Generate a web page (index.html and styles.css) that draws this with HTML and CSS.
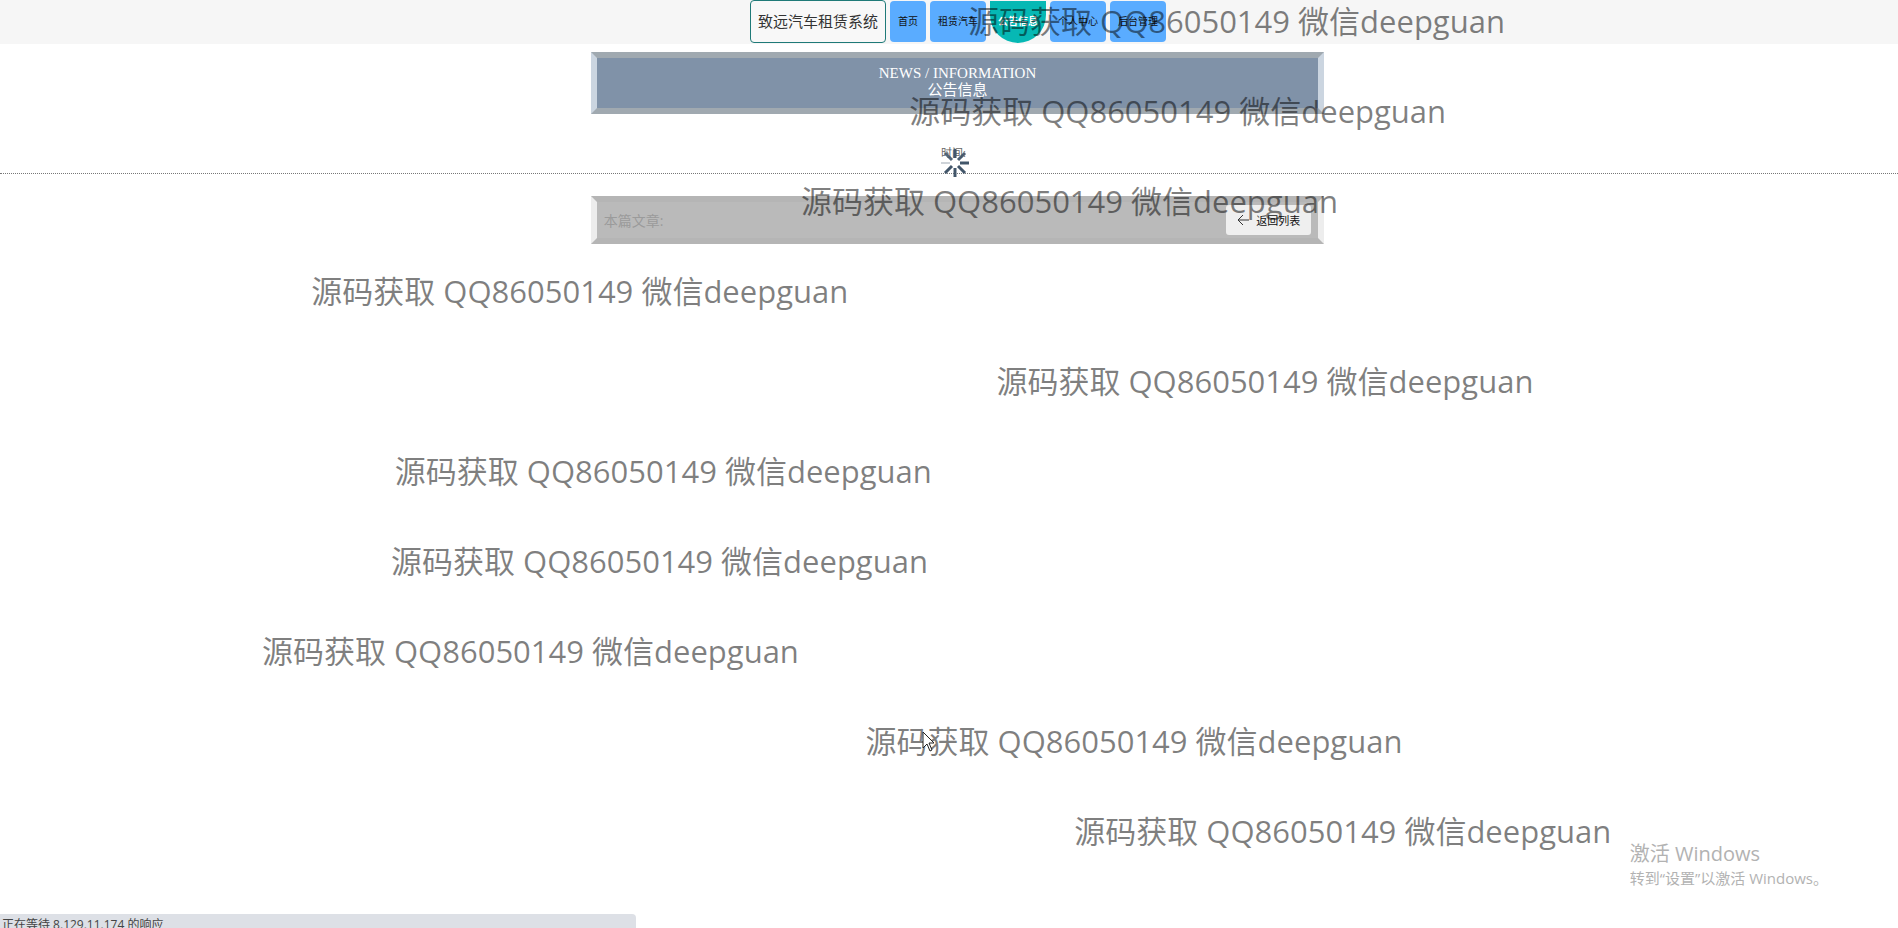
FILE: index.html
```
<!DOCTYPE html>
<html lang="zh-CN">
<head>
    <meta charset="UTF-8">
    <meta name="viewport" content="width=device-width, initial-scale=1.0">
    <title>公告信息</title>
    <link rel="stylesheet" href="styles.css">
</head>
<body>

<header class="header">
    <nav class="nav">
        <a class="brand" href="#">致远汽车租赁系统</a>
        <a class="nav-item" href="#">首页</a>
        <a class="nav-item" href="#">租赁汽车</a>
        <a class="nav-item active" href="#">公告信息</a>
        <a class="nav-item" href="#">个人中心</a>
        <a class="nav-item" href="#">后台管理</a>
    </nav>
</header>

<main class="main">
    <div class="row">
        <div class="panel title-panel">
            <h1>NEWS / INFORMATION</h1>
            <p>公告信息</p>
        </div>
    </div>

    <div class="row time-row">
        <div class="time">时间:
            <svg class="spinner" viewBox="0 0 28 28" width="28" height="28" stroke="#42566a" stroke-width="3">
                <path d="M14 0V9"/>
                <path d="M24 4L17 11" opacity=".95"/>
                <path d="M19 14H28"/>
                <path d="M17 17L24 24"/>
                <path d="M14 19V28"/>
                <path d="M11 17L4 24"/>
                <path d="M0 14H9" stroke-width="2" opacity=".25"/>
                <path d="M4 4L11 11" opacity=".9"/>
            </svg>
        </div>
    </div>
    <hr class="line">

    <div class="row">
        <div class="panel article-panel">
            <span class="article-label">本篇文章:</span>
            <button class="back-button" type="button">
                <svg viewBox="0 0 12 12" width="12" height="12" fill="none" stroke="#333">
                    <path d="M12 6H1M6 1L1 6L6 11"/>
                </svg>
                返回列表
            </button>
        </div>
    </div>
</main>

<div class="watermarks">
    <p class="mark mark-1">源码获取 QQ86050149 微信deepguan</p>
    <p class="mark mark-2">源码获取 QQ86050149 微信deepguan</p>
    <p class="mark mark-3">源码获取 QQ86050149 微信deepguan</p>
    <p class="mark mark-4">源码获取 QQ86050149 微信deepguan</p>
    <p class="mark mark-5">源码获取 QQ86050149 微信deepguan</p>
    <p class="mark mark-6">源码获取 QQ86050149 微信deepguan</p>
    <p class="mark mark-7">源码获取 QQ86050149 微信deepguan</p>
    <p class="mark mark-8">源码获取 QQ86050149 微信deepguan</p>
    <p class="mark mark-9">源码获取 QQ86050149 微信deepguan</p>
    <p class="mark mark-10">源码获取 QQ86050149 微信deepguan</p>
</div>

<div class="activate">
    <p class="activate-title">激活 Windows</p>
    <p>转到“设置”以激活 Windows。</p>
</div>

<div class="status">正在等待 8.129.11.174 的响应</div>

<svg class="cursor" viewBox="0 0 13 21" width="13" height="21">
    <path d="M1 1V17L5 13L8 20L10 19L7 12H12Z" fill="#fff" stroke="#222"/>
</svg>

</body>
</html>
```

FILE: styles.css
```
body {
    margin: 0;
    min-height: 100vh;
    overflow: hidden;
    background-color: #fff;
    font-family: "Open Sans", "Noto Sans CJK SC", sans-serif;
    font-size: 12px;
    color: #222;
}
p, h1 {
    margin: 0;
    font-weight: normal;
}
.header {
    height: 44px;
    background-color: #f6f6f6;
}
.nav {
    display: flex;
    justify-content: center;
    align-items: center;
    gap: 4px;
    padding-left: 18px;
}
.nav a {
    box-sizing: border-box;
    text-decoration: none;
    color: #111;
}
.nav .brand {
    height: 43px;
    padding: 0 7px;
    border: 1px solid #1f7a78;
    border-radius: 4px;
    background-color: #f8f8f8;
    font-size: 15px;
    line-height: 41px;
    color: #333;
}
.nav-item {
    height: 41px;
    padding: 0 8px;
    border-radius: 4px;
    background-color: #5aacff;
    font-size: 10px;
    line-height: 40px;
}
.nav .active {
    height: 42px;
    border-radius: 0 0 28px 28px;
    background-color: #06b8b4;
    color: #fff;
    font-weight: bold;
}
.row {
    display: flex;
    justify-content: center;
    padding-left: 17px;
}
.panel {
    box-sizing: border-box;
    width: 39%;
    min-width: 420px;
    border: 6px solid;
}
.title-panel {
    margin-top: 8px;
    padding: 7px 0 11px;
    border-color: #a0a9b0 #cbd5e0;
    background-color: #8092a8;
    color: #fff;
    text-align: center;
    line-height: 16px;
}
.title-panel h1 {
    font-family: "Liberation Serif", serif;
    font-size: 15px;
}
.title-panel p {
    font-size: 15px;
}
.time-row {
    padding-top: 31px;
    padding-right: 8px;
}
.time {
    position: relative;
    height: 28px;
    font-size: 11px;
    line-height: 16px;
    color: #666;
}
.spinner {
    position: absolute;
    top: 4px;
    left: 0;
}
.line {
    margin: 0 0 22px;
    border: 0;
    border-top: 1px dotted #777;
}
.article-panel {
    display: flex;
    justify-content: space-between;
    align-items: center;
    height: 48px;
    padding: 0 7px;
    border-color: #b5b5b5 #ededed;
    background-color: #bababa;
}
.article-label {
    font-size: 14px;
    color: #9b9b9b;
}
.back-button {
    display: flex;
    align-items: center;
    gap: 7px;
    height: 30px;
    padding: 0 11px;
    border: 0;
    border-radius: 3px;
    background-color: #efefef;
    font-family: inherit;
    font-size: 11px;
    color: #111;
}
.watermarks {
    position: absolute;
    top: 0;
    left: 0;
    width: 100%;
    overflow: hidden;
    pointer-events: none;
}
.mark {
    height: 90px;
    font-size: 31px;
    line-height: 42px;
    white-space: nowrap;
    color: rgba(0, 0, 0, 0.5);
}
.mark-1 { margin-left: 51%; }
.mark-2 { margin-left: 47.9%; }
.mark-3 { margin-left: 42.2%; }
.mark-4 { margin-left: 16.4%; }
.mark-5 { margin-left: 52.5%; }
.mark-6 { margin-left: 20.8%; }
.mark-7 { margin-left: 20.6%; }
.mark-8 { margin-left: 13.8%; }
.mark-9 { margin-left: 45.6%; }
.mark-10 { margin-left: 56.6%; }
.activate {
    position: absolute;
    right: 70px;
    bottom: 38px;
    font-size: 15px;
    line-height: 24px;
    color: #b2b2b2;
}
.activate-title {
    font-size: 20px;
}
.status {
    position: absolute;
    left: 0;
    bottom: 0;
    box-sizing: border-box;
    width: 636px;
    height: 14px;
    padding-left: 2px;
    overflow: hidden;
    border-top-right-radius: 4px;
    background-color: #dde0e6;
    font-size: 12px;
    line-height: 22px;
    color: #444;
}
.cursor {
    position: absolute;
    top: 731px;
    left: 922px;
}
```
